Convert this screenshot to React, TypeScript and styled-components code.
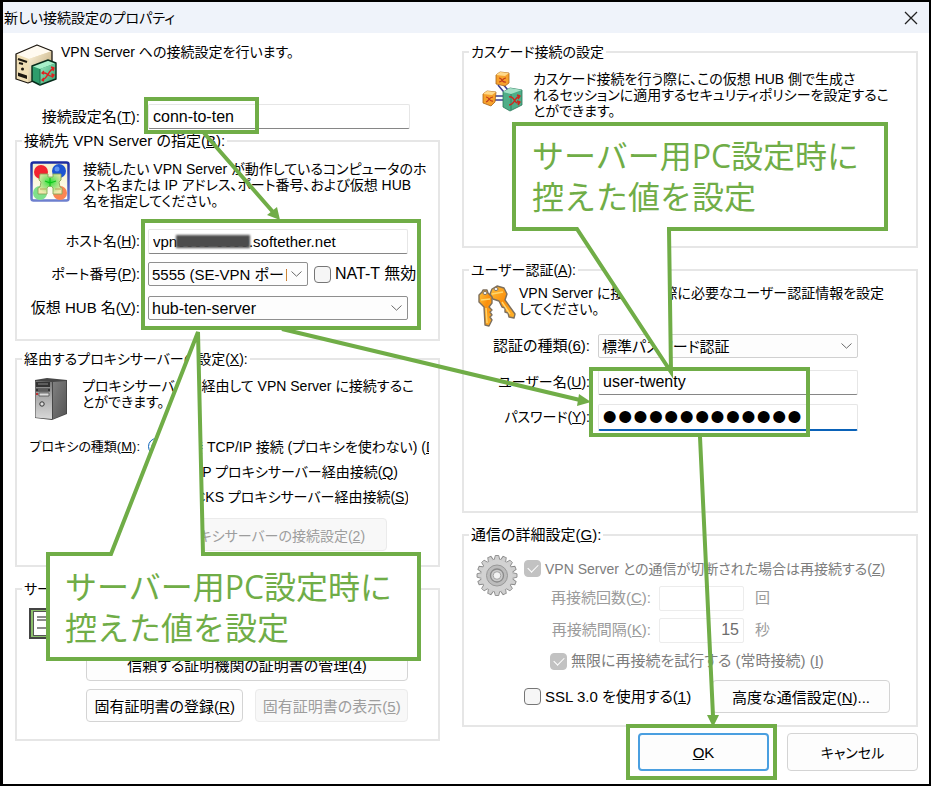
import React from "react";
import styled, { createGlobalStyle } from "styled-components";

const GREEN = "#70ad47";
const UI_FONT = `"Liberation Sans", "Noto Sans CJK JP", sans-serif`;

const GlobalStyle = createGlobalStyle`
  * { box-sizing: border-box; }
  body { margin: 0; background: #fff; }
  body, button, input, select {
    font-family: ${UI_FONT};
    font-size: 15px;
    font-feature-settings: "palt";
    color: #000;
  }
`;

const Dialog = styled.main`
  position: relative;
  min-height: 786px;
  display: flex;
  flex-direction: column;
  border: 2px solid #000;
  border-left-width: 3px;
  background: #fff;
  line-height: 16px;
  white-space: nowrap;
  overflow: hidden;
`;

const TitleBar = styled.header`
  display: flex;
  align-items: center;
  justify-content: space-between;
  height: 31px;
  padding: 0 9px 0 1px;
  background: #eff3fa;
`;

const Title = styled.h1`
  margin: 0;
  font-size: 14px;
  font-weight: 400;
`;

const CloseButton = styled.button`
  display: flex;
  padding: 2px;
  border: 0;
  background: none;
`;

const Columns = styled.div`
  display: grid;
  grid-template-columns: minmax(0, 425fr) minmax(0, 456fr);
  gap: 22px;
  padding: 9px 11px 0 12px;
`;

const Column = styled.div`
  display: flex;
  flex-direction: column;
`;

const Group = styled.fieldset<{ $bottom: number; $gap?: number }>`
  margin: 0 0 ${(p) => p.$gap ?? 8}px;
  padding: 0 0 ${(p) => p.$bottom}px;
  border: 2px solid #e6e6e6;
  min-width: 0;
`;

const Legend = styled.legend<{ $small?: boolean }>`
  margin-left: 5px;
  padding: 0 2px;
  font-size: ${(p) => (p.$small ? 14 : 15)}px;
  line-height: 20px;
`;

const Intro = styled.div<{ $left?: number; $top?: number; $gap: number; $height: number }>`
  display: flex;
  align-items: flex-start;
  gap: ${(p) => p.$gap}px;
  min-height: ${(p) => p.$height}px;
  padding: ${(p) => p.$top ?? 0}px 0 0 ${(p) => p.$left ?? 0}px;
  svg { flex: none; }
`;

const Description = styled.p`
  margin: 0;
  font-size: 14px;
`;

const Row = styled.div<{ $label: number; $height: number; $right?: number }>`
  display: grid;
  grid-template-columns: ${(p) => p.$label}px minmax(0, 1fr);
  align-items: center;
  column-gap: 8px;
  height: ${(p) => p.$height}px;
  padding-right: ${(p) => p.$right ?? 30}px;
`;

const RowLabel = styled.label<{ $muted?: boolean; $small?: boolean }>`
  text-align: right;
  font-size: ${(p) => (p.$small ? 14 : 15)}px;
  color: ${(p) => (p.$muted ? "#9b9b9b" : "#000")};
`;

const RowCaption = styled.span`
  text-align: right;
  font-size: 13px;
`;

const TextBox = styled.input<{ $focus?: boolean }>`
  width: 100%;
  min-width: 0;
  height: 25px;
  padding: 0 4px;
  border: 1px solid #e6e6e6;
  border-bottom: ${(p) => (p.$focus ? "2px solid #0a62b8" : "1px solid #868686")};
  border-radius: 2px;
  background: #fff;
  font-size: 16px;
  outline: none;
`;

const HostBox = styled(TextBox)`
  font-size: 15px;
`;

const PasswordBox = styled(TextBox)`
  height: 27px;
  padding: 0 3px;
  font-size: 44px;
  line-height: 24px;
`;

const NumberBox = styled(TextBox)`
  width: 85px;
  border: 1px solid #ececec;
  color: #6d6d6d;
  text-align: right;
`;

const RedactedField = styled.div`
  position: relative;
`;

const Redaction = styled.span`
  position: absolute;
  left: 28px;
  top: 6px;
  width: 74px;
  height: 13px;
  background: #4c4c4c;
  filter: blur(1px);
`;

const SelectFrame = styled.div<{ $soft?: boolean }>`
  position: relative;
  display: flex;
  align-items: center;
  height: 24px;
  border: 1px solid ${(p) => (p.$soft ? "#d0d0d0" : "#8f8f8f")};
  border-radius: 2px;
  background: #fdfdfd;
  svg { position: absolute; right: 4px; pointer-events: none; }
`;

const Select = styled.select<{ $large?: boolean }>`
  appearance: none;
  width: 100%;
  height: 22px;
  padding: 0 20px 0 3px;
  border: 0;
  background: none;
  font-size: ${(p) => (p.$large ? 16 : 15)}px;
  outline: none;
`;

const PortLine = styled.div`
  display: grid;
  grid-template-columns: 160px auto;
  align-items: center;
  justify-content: start;
  gap: 6px;
`;

const CheckLine = styled.label<{ $muted?: boolean; $size?: number }>`
  display: flex;
  align-items: center;
  gap: 4px;
  font-size: ${(p) => p.$size ?? 15}px;
  color: ${(p) => (p.$muted ? "#7d7d7d" : "#000")};
`;

const CheckBox = styled.input`
  appearance: none;
  flex: none;
  width: 17px;
  height: 17px;
  margin: 0;
  border: 1px solid #767676;
  border-radius: 4px;
  background: #f6f6f6;
  &:checked {
    border-color: #c2c2c2;
    background: #c2c2c2;
    display: grid;
    place-items: center;
  }
  &:checked::after {
    content: "";
    width: 9px;
    height: 5px;
    margin-bottom: 3px;
    border: solid #fff;
    border-width: 0 0 1px 1px;
    transform: rotate(-45deg);
  }
`;

const RadioBox = styled.input`
  flex: none;
  width: 17px;
  height: 17px;
  margin: 0;
  accent-color: #0a62b8;
`;

const RadioList = styled.div`
  display: flex;
  flex-direction: column;
  overflow: hidden;
`;

const RadioLine = styled.label`
  display: flex;
  align-items: center;
  gap: 10px;
  height: 25px;
  font-size: 14px;
`;

const PushButton = styled.button<{ $default?: boolean; $tall?: boolean; $small?: boolean }>`
  height: ${(p) => (p.$tall ? 38 : 33)}px;
  padding: 0 4px;
  border: ${(p) => (p.$default ? "2px solid #4a9fe0" : "1px solid #d4d4d4")};
  border-radius: 4px;
  background: #fdfdfd;
  font-size: ${(p) => (p.$small ? 14 : 15)}px;
  white-space: nowrap;
  &:disabled { color: #9d9d9d; background: #f8f8f8; border-color: #ebebeb; }
`;

const ProxyAction = styled.div`
  display: grid;
  padding: 9px 51px 0 133px;
`;

const CertificateActions = styled.div`
  display: grid;
  grid-template-columns: 158fr 153fr;
  column-gap: 12px;
  row-gap: 8px;
  padding: 2px 30px 0 69px;
  button:first-child { grid-column: 1 / -1; }
`;

const Advanced = styled.div`
  display: grid;
  grid-template-columns: 42px minmax(0, 1fr);
  column-gap: 6px;
  padding: 0 26px 0 12px;
  > svg { margin-top: 9px; }
`;

const AdvancedRows = styled.div`
  display: flex;
  flex-direction: column;
  padding-top: 15px;
`;

const RetryRows = styled.div`
  display: grid;
  grid-template-columns: 127px 85px auto;
  grid-auto-rows: 32px;
  align-items: center;
  justify-content: start;
  column-gap: 8px;
  margin-top: 5px;
`;

const Unit = styled.span`
  padding-left: 3px;
  color: #9b9b9b;
`;

const Indent = styled.div`
  display: flex;
  align-items: center;
  height: 30px;
  padding-left: 26px;
`;

const SslLine = styled.div`
  display: grid;
  grid-template-columns: 1fr 178px;
  align-items: center;
  margin-top: 4px;
`;

const Footer = styled.footer`
  display: flex;
  justify-content: flex-end;
  gap: 18px;
  margin-top: -8px;
  padding-right: 11px;
  button { width: 131px; }
`;

const Markup = styled.svg`
  position: absolute;
  left: -3px;
  top: -2px;
  pointer-events: none;
`;

const CalloutText = styled.p<{ $x: number; $y: number }>`
  position: absolute;
  left: ${(p) => p.$x}px;
  top: ${(p) => p.$y}px;
  margin: 0;
  color: ${GREEN};
  font-family: "Open Sans", "Noto Sans CJK JP", sans-serif;
  font-size: 32px;
  font-weight: 400;
  font-feature-settings: normal;
  line-height: 41px;
  pointer-events: none;
`;

const Chevron = () => (
  <svg width="13" height="8" viewBox="0 0 13 8" fill="none" stroke="#6a6a6a">
    <path d="M1.5 1.5 6.5 6.2 11.5 1.5" />
  </svg>
);

const ServerIcon = () => (
  <svg width="43" height="43" viewBox="0 0 43 43" strokeLinejoin="round">
    <defs>
      <linearGradient id="caseSide" x1="0" x2="1" y2="1">
        <stop stopColor="#fff6df" /><stop offset="1" stopColor="#b39a66" />
      </linearGradient>
      <linearGradient id="cubeSide" x1="0" x2="1" y2="1">
        <stop stopColor="#9be8c0" /><stop offset="1" stopColor="#2b9a68" />
      </linearGradient>
    </defs>
    <path d="M1 10 22 1 37 7 37 30 13 39 1 35Z" fill="#f0dfb6" />
    <path d="M1 10 22 1 37 7 14 15Z" fill="#fffaf0" />
    <path d="M14 15 37 7V30L13 39Z" fill="url(#caseSide)" />
    <path d="M1 10 22 1 37 7 37 30 13 39 1 35Z" fill="none" stroke="#1c1710" strokeWidth="1.3" />
    <path d="M3 15 12 18M4 19 8 20" stroke="#1c1710" strokeWidth="2" />
    <path d="M3 28.500 12 31.500V35L3 32Z" fill="#1c1710" />
    <circle cx="7.500" cy="25" r="1.500" fill="#1c1710" />
    <path d="M17 22 33 16 41 19V35L25 41 17 37Z" fill="#2f9d6c" />
    <path d="M17 22 33 16 41 19 25 25Z" fill="#a7f0c9" />
    <path d="M25 25 41 19V35L25 41Z" fill="url(#cubeSide)" />
    <path d="M17 22 33 16 41 19V35L25 41 17 37Z" fill="none" stroke="#072c1b" strokeWidth="1.4" />
    <path d="M25 25V41" stroke="#1a6a48" />
    <path d="M27 29C33 27 33 35 39 31M27 36C33 35 33 26 39 24M36 23l3 1-1 3M36.500 30l2.500 1-2 2.500M29 27l-2 2 2 1M29 34l-2 2 2 1" fill="none" stroke="#e01f1f" strokeWidth="1.4" />
  </svg>
);

const NetworkIcon = () => (
  <svg width="41" height="42" viewBox="0 0 41 42" strokeLinejoin="round">
    <defs>
      <linearGradient id="netBack" y2="1" x2="0">
        <stop stopColor="#f3efcf" /><stop offset=".5" stopColor="#fbf8dc" /><stop offset="1" stopColor="#fff" />
      </linearGradient>
      <linearGradient id="netFrame" y2="1" x2="0">
        <stop stopColor="#1c2ba0" /><stop offset="1" stopColor="#6d7fce" />
      </linearGradient>
      <radialGradient id="netGlow" cx=".5" cy=".4" r=".6">
        <stop stopColor="#29e52f" /><stop offset=".45" stopColor="#8fe27a" /><stop offset="1" stopColor="#f4e8ae" />
      </radialGradient>
    </defs>
    <rect x="1.500" y="1.500" width="37" height="38" rx="2" fill="url(#netBack)" stroke="url(#netFrame)" strokeWidth="2.500" />
    <circle cx="11" cy="11" r="7" fill="#f32430" />
    <circle cx="29" cy="10" r="7" fill="#1c55d2" />
    <circle cx="27" cy="8" r="2.500" fill="#5f93f2" />
    <circle cx="10" cy="32" r="7" fill="#7fe08a" />
    <circle cx="30" cy="32" r="7" fill="#fb8552" />
    <path d="M10 13h8v3h5v-3h8v6l-2 2 1 5 2 1v6h-9v-6l-3-3-3 3v6H8v-6l2-1 1-5-2-2z" fill="url(#netGlow)" stroke="#87a758" strokeWidth=".9" />
    <path d="M10 28h6M25 28h6" stroke="#b7a65a" />
    <path d="M15 20l5 2 6-2M20 17v9" stroke="#0fc41c" strokeWidth="1.200" fill="none" />
  </svg>
);

const TowerIcon = () => (
  <svg width="34" height="43" viewBox="0 0 34 43">
    <defs>
      <linearGradient id="towerFront" y2="1" x2="0">
        <stop stopColor="#777" /><stop offset=".4" stopColor="#aaa" /><stop offset="1" stopColor="#d8d8d8" />
      </linearGradient>
      <linearGradient id="towerSide" x2="1" y2="1">
        <stop stopColor="#808080" /><stop offset="1" stopColor="#555" />
      </linearGradient>
    </defs>
    <path d="M1 2 13 0 33 2V36L18 42 1 40Z" fill="#474747" />
    <path d="M1.500 3 18 4V41L1.500 39.500Z" fill="url(#towerFront)" />
    <path d="M19 4 32 3V35.500L19 41Z" fill="url(#towerSide)" />
    <path d="M2 4h14v5H2zM2 10.500h14v3H2z" fill="#333" />
    <path d="M4 6h10M4 12h10" stroke="#888" />
    <path d="M5 15h10v3H5z" fill="#ddd" stroke="#444" strokeWidth=".7" />
    <path d="M2 15h2v2H2z" fill="#b33" />
    <circle cx="8" cy="26" r="2.200" fill="#ddd" stroke="#333" />
  </svg>
);

const CertificateIcon = () => (
  <svg width="42" height="31" viewBox="0 0 42 31">
    <rect x="1" y="1" width="40" height="29" fill="#8cc06c" stroke="#444" strokeWidth="2" />
    <rect x="4.500" y="3.500" width="33" height="24" fill="#fff" stroke="#555" />
    <path d="M8 9h26M8 12h26M8 20h26" stroke="#666" strokeWidth="1.500" />
  </svg>
);

const CascadeIcon = () => (
  <svg width="41" height="41" viewBox="0 0 41 41" strokeLinejoin="round">
    <path d="M20 12l10 12M16 14l10 12M10 25h13M10 29h13" stroke="#3a3f91" strokeWidth="1.600" />
    <g fill="#f6a12c" stroke="#a8641b" strokeWidth=".8">
      <path d="M14 4 18 1 27 2 27 12 23 15 14 13Z" />
      <path d="M1 23 5 20 14 21 13 31 9 35 1 32Z" />
    </g>
    <path d="M14 4 18 1 27 2 23 5ZM1 23 5 20 14 21 10 24Z" fill="#ffd98a" />
    <path d="M21 21 28 17 40 19 40 34 28 40 21 36Z" fill="#4fae88" stroke="#2a7658" strokeWidth=".8" />
    <path d="M21 21 28 17 40 19 29 23Z" fill="#a4e0c6" />
    <path d="M29 23V39" stroke="#2b7a5a" strokeWidth=".8" />
    <path d="M17 7c4 0 2 5 7 4M17 11c4 0 3-4 7-4M4 26c4 0 3 5 7 4M4 31c3-1 3-5 7-5" fill="none" stroke="#c03a1c" strokeWidth="1.200" />
    <path d="M27 26c6-2 5 9 11 5M27 34c6 0 5-8 11-9M35 24l3 1-2 3M35 30l3 1-2 3" fill="none" stroke="#c92a22" strokeWidth="1.400" />
  </svg>
);

const KeysIcon = () => (
  <svg width="40" height="43" viewBox="0 0 40 43" strokeLinejoin="round">
    <defs>
      <linearGradient id="gold" x2="1" y2="1">
        <stop stopColor="#ffc23c" /><stop offset=".5" stopColor="#fb8f0b" /><stop offset="1" stopColor="#ffb52e" />
      </linearGradient>
    </defs>
    <g fill="url(#gold)" stroke="#7d6f5d" strokeWidth="1.400">
      <path d="M15 4 20 1 27 3 30 9 28 15 38 29 37 33 32 32 31 28 28 27 28 23 25 22 22 16 16 14 13 9Z" />
      <path d="M2 10 5 7 6 5 10 5 11 8 15 12 15 18 12 22 15 25 13 27 15 30 13 32 15 35 12 41 8 40 7 22 2 17Z" />
    </g>
    <path d="M15 9l11-2M4 15l9-1M25 17l8 12M9 23l1 15" stroke="#ffd56b" strokeWidth="1.500" />
    <ellipse cx="8" cy="8" rx="2" ry="1.500" fill="#fff" stroke="#7d6f5d" />
    <ellipse cx="19" cy="4" rx="2" ry="1.500" fill="#fff" stroke="#7d6f5d" />
  </svg>
);

const TEETH = Array.from({ length: 16 }, (_, i) => (i * 360) / 16);

const GearIcon = () => (
  <svg width="42" height="43" viewBox="-21 -21 42 42">
    {TEETH.map((a) => (
      <path key={a} d="M-3 -15 -1.700 -20 1.700 -20 3 -15Z" fill="#d0d0d0" stroke="#8a8a8a" strokeWidth=".9" transform={`rotate(${a})`} />
    ))}
    <circle r="16" fill="#d2d2d2" />
    <circle r="10.500" fill="#bcbcbc" stroke="#989898" />
    <circle r="6.500" fill="#cacaca" stroke="#8a8a8a" strokeWidth="1.300" />
    <circle r="3.800" fill="#f2f2f2" stroke="#a5a5a5" />
  </svg>
);

const CALLOUT = "サーバー用PC設定時に";

const Annotations = () => (
  <>
    <Markup width="931" height="786" viewBox="0 0 931 786" fill="none" stroke={GREEN} strokeWidth="4">
      <rect x="146" y="99" width="111" height="33" />
      <rect x="143" y="221" width="276" height="107" />
      <rect x="591" y="369" width="217" height="66" />
      <rect x="628" y="726" width="147" height="52" />
      <path d="M204 133 273 212M282 329 580 400M700 437 713 716" />
      <path d="M280 220 277 207 267 215ZM591 402 579 394 577 406ZM713 727 719 715 707 715Z" fill={GREEN} stroke="none" />
      <path d="M48 554H111L198 332 203 554H419V659H48Z" fill="#fff" />
      <path d="M514 124H886V229H669L671 372 577 229H514Z" fill="#fff" />
    </Markup>
    <CalloutText $x={529} $y={133}>{CALLOUT}<br />控えた値を設定</CalloutText>
    <CalloutText $x={62} $y={564}>{CALLOUT}<br />控えた値を設定</CalloutText>
  </>
);

export default function App() {
  return (
    <>
      <GlobalStyle />
      <Dialog>
        <TitleBar>
          <Title>新しい接続設定のプロパティ</Title>
          <CloseButton aria-label="閉じる">
            <svg width="14" height="14" viewBox="0 0 14 14" stroke="#222" strokeWidth="1.300">
              <path d="M1 1 13 13M13 1 1 13" />
            </svg>
          </CloseButton>
        </TitleBar>

        <Columns>
          <Column>
            <Intro $gap={3} $top={2} $height={60}>
              <ServerIcon />
              <Description>VPN Server への接続設定を行います。</Description>
            </Intro>
            <Row $label={125} $height={29}>
              <RowLabel htmlFor="name">接続設定名(<u>T</u>):</RowLabel>
              <TextBox id="name" defaultValue="conn-to-ten" />
            </Row>

            <Group $bottom={14}>
              <Legend>接続先 VPN Server の指定(<u>B</u>):</Legend>
              <Intro $left={13} $gap={12} $top={10} $height={74}>
                <NetworkIcon />
                <Description>
                  接続したい VPN Server が動作しているコンピュータのホ<br />
                  スト名または IP アドレス、ポート番号、および仮想 HUB<br />
                  名を指定してください。
                </Description>
              </Intro>
              <Row $label={123} $height={32}>
                <RowLabel $small htmlFor="host">ホスト名(<u>H</u>):</RowLabel>
                <RedactedField>
                  <HostBox id="host" defaultValue="vpn0000-0000.softether.net" />
                  <Redaction />
                </RedactedField>
              </Row>
              <Row $label={123} $height={34}>
                <RowLabel $small htmlFor="port">ポート番号(<u>P</u>):</RowLabel>
                <PortLine>
                  <SelectFrame>
                    <Select id="port"><option>5555 (SE-VPN ポート)</option></Select>
                    <Chevron />
                  </SelectFrame>
                  <CheckLine $size={16}><CheckBox type="checkbox" /><span>NAT-T 無効</span></CheckLine>
                </PortLine>
              </Row>
              <Row $label={123} $height={34}>
                <RowLabel htmlFor="hub">仮想 HUB 名(<u>V</u>):</RowLabel>
                <SelectFrame>
                  <Select $large id="hub"><option>hub-ten-server</option></Select>
                  <Chevron />
                </SelectFrame>
              </Row>
            </Group>

            <Group $bottom={14} $gap={12}>
              <Legend $small>経由するプロキシサーバーの設定(<u>X</u>):</Legend>
              <Intro $left={17} $gap={14} $top={9} $height={65}>
                <TowerIcon />
                <Description>
                  プロキシサーバーを経由して VPN Server に接続するこ<br />
                  とができます。
                </Description>
              </Intro>
              <Row $label={123} $height={25} $right={9}>
                <RowCaption>プロキシの種類(<u>M</u>):</RowCaption>
                <RadioList>
                  <RadioLine>
                    <RadioBox type="radio" name="proxy" defaultChecked />
                    <span>直接 TCP/IP 接続 (プロキシを使わない) (<u>D</u>)</span>
                  </RadioLine>
                </RadioList>
              </Row>
              <Row $label={123} $height={50}>
                <span />
                <RadioList>
                  <RadioLine>
                    <RadioBox type="radio" name="proxy" />
                    <span>HTTP プロキシサーバー経由接続(<u>Q</u>)</span>
                  </RadioLine>
                  <RadioLine>
                    <RadioBox type="radio" name="proxy" />
                    <span>SOCKS プロキシサーバー経由接続(<u>S</u>)</span>
                  </RadioLine>
                </RadioList>
              </Row>
              <ProxyAction>
                <PushButton $small disabled>プロキシサーバーの接続設定(<u>2</u>)</PushButton>
              </ProxyAction>
            </Group>

            <Group $bottom={17} $gap={0}>
              <Legend $small>サー</Legend>
              <Intro $left={12} $gap={0} $top={9} $height={47}>
                <CertificateIcon />
              </Intro>
              <CertificateActions>
                <PushButton>信頼する証明機関の証明書の管理(<u>4</u>)</PushButton>
                <PushButton>固有証明書の登録(<u>R</u>)</PushButton>
                <PushButton disabled>固有証明書の表示(<u>5</u>)</PushButton>
              </CertificateActions>
            </Group>
          </Column>

          <Column>
            <Group $bottom={118} $gap={12}>
              <Legend $small>カスケード接続の設定</Legend>
              <Intro $left={18} $gap={10} $top={9} $height={66}>
                <CascadeIcon />
                <Description>
                  カスケード接続を行う際に、この仮想 HUB 側で生成さ<br />
                  れるセッションに適用するセキュリティポリシーを設定するこ<br />
                  とができます。
                </Description>
              </Intro>
            </Group>

            <Group $bottom={77} $gap={12}>
              <Legend $small>ユーザー認証(<u>A</u>):</Legend>
              <Intro $left={13} $gap={2} $top={5} $height={48}>
                <KeysIcon />
                <Description>
                  VPN Server に接続する際に必要なユーザー認証情報を設定<br />
                  してください。
                </Description>
              </Intro>
              <Row $label={126} $height={36} $right={58}>
                <RowLabel htmlFor="auth">認証の種類(<u>6</u>):</RowLabel>
                <SelectFrame $soft>
                  <Select id="auth"><option>標準パスワード認証</option></Select>
                  <Chevron />
                </SelectFrame>
              </Row>
              <Row $label={126} $height={36} $right={58}>
                <RowLabel $small htmlFor="user">ユーザー名(<u>U</u>):</RowLabel>
                <TextBox id="user" defaultValue="user-twenty" />
              </Row>
              <Row $label={126} $height={34} $right={58}>
                <RowLabel $small htmlFor="password">パスワード(<u>Y</u>):</RowLabel>
                <PasswordBox id="password" type="password" $focus defaultValue="0000000000000" />
              </Row>
            </Group>

            <Group $bottom={12} $gap={0}>
              <Legend>通信の詳細設定(<u>G</u>):</Legend>
              <Advanced>
                <GearIcon />
                <AdvancedRows>
                  <CheckLine $muted $size={14}>
                    <CheckBox type="checkbox" defaultChecked disabled />
                    <span>VPN Server との通信が切断された場合は再接続する(<u>Z</u>)</span>
                  </CheckLine>
                  <RetryRows>
                    <RowLabel $muted htmlFor="count">再接続回数(<u>C</u>):</RowLabel>
                    <NumberBox id="count" disabled />
                    <Unit>回</Unit>
                    <RowLabel $muted htmlFor="interval">再接続間隔(<u>K</u>):</RowLabel>
                    <NumberBox id="interval" disabled defaultValue="15" />
                    <Unit>秒</Unit>
                  </RetryRows>
                  <Indent>
                    <CheckLine $muted>
                      <CheckBox type="checkbox" defaultChecked disabled />
                      <span>無限に再接続を試行する (常時接続) (<u>I</u>)</span>
                    </CheckLine>
                  </Indent>
                  <SslLine>
                    <CheckLine>
                      <CheckBox type="checkbox" />
                      <span>SSL 3.0 を使用する(<u>1</u>)</span>
                    </CheckLine>
                    <PushButton>高度な通信設定(<u>N</u>)...</PushButton>
                  </SslLine>
                </AdvancedRows>
              </Advanced>
            </Group>
          </Column>
        </Columns>

        <Footer>
          <PushButton $default $tall><u>O</u>K</PushButton>
          <PushButton $tall $small>キャンセル</PushButton>
        </Footer>

        <Annotations />
      </Dialog>
    </>
  );
}
